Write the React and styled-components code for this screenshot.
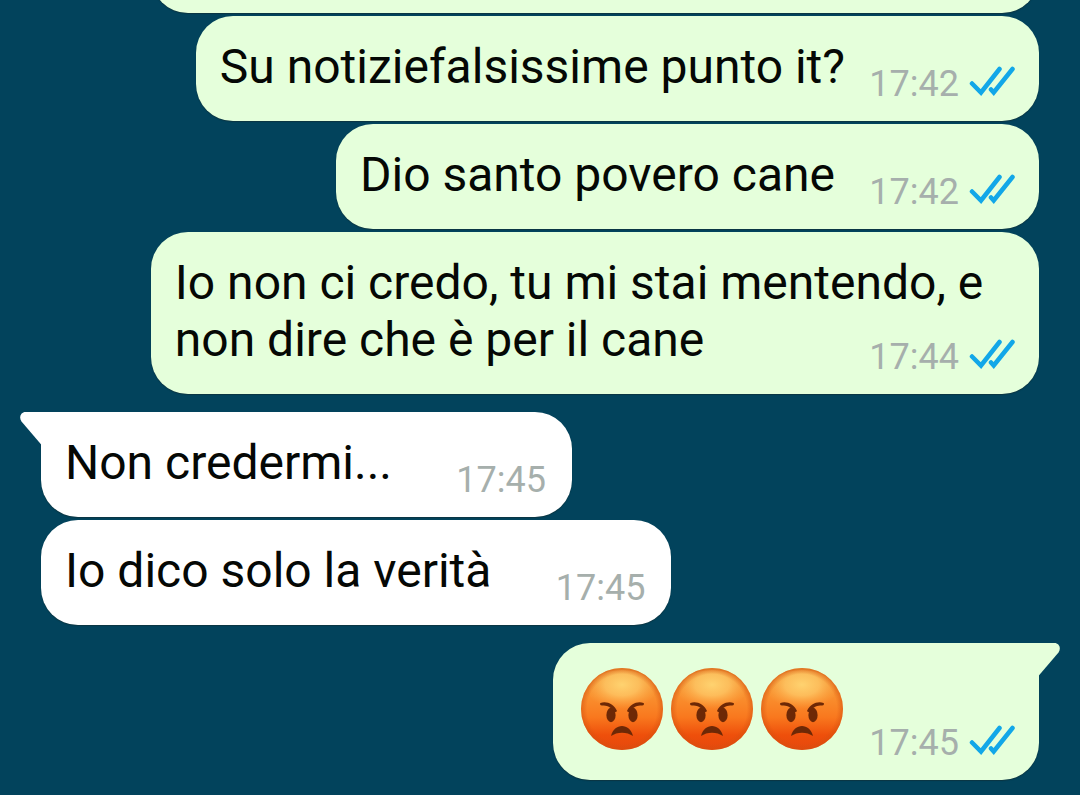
import React from 'react'
import styled, { createGlobalStyle } from 'styled-components'

const messages = [
    { id: 1, type: 'sent', text: '', time: '' },
    { id: 2, type: 'sent', text: 'Su notiziefalsissime punto it?', time: '17:42', space: 170 },
    { id: 3, type: 'sent', text: 'Dio santo povero cane', time: '17:42', space: 180 },
    { id: 4, type: 'sent', text: 'Io non ci credo, tu mi stai mentendo, e non dire che è per il cane', time: '17:44', space: 180 },
    { id: 5, type: 'received', text: 'Non credermi...', time: '17:45', space: 154, first: true },
    { id: 6, type: 'received', text: 'Io dico solo la verità', time: '17:45', space: 154 },
    { id: 7, type: 'sent', emojis: 3, time: '17:45', space: 168, first: true },
]

const Ticks = () => (
    <TicksIcon viewBox="0 0 46 32" aria-label="Letto" role="img">
        <path d="M3 18.5 L12 27.5 L30.5 4 M22 24.5 L24.7 27.5 L43.5 4" />
    </TicksIcon>
)

const Tail = ({ side }) => (
    <TailShape $side={side} viewBox="0 0 22 34" aria-hidden="true">
        <path d="M22 0 H5.5 C1 0 -1.5 5 1.5 9.5 L22 33.5 Z" />
    </TailShape>
)

const AngryFace = () => (
    <Face viewBox="0 0 90 89" role="img" aria-label="Faccina arrabbiata">
        <defs>
            <linearGradient id="skin" x1="0" y1="0" x2="0" y2="1">
                <stop offset="0" stopColor="#ee9c38" />
                <stop offset="0.35" stopColor="#f98f2e" />
                <stop offset="0.6" stopColor="#f9781e" />
                <stop offset="0.82" stopColor="#ee4f0b" />
                <stop offset="1" stopColor="#e5480d" />
            </linearGradient>
            <radialGradient id="edge">
                <stop offset="0.85" stopColor="#d4500f" stopOpacity="0" />
                <stop offset="1" stopColor="#d4500f" stopOpacity="0.55" />
            </radialGradient>
            <radialGradient id="shine" cx="0.5" cy="0.35" r="0.58">
                <stop offset="0" stopColor="#ffd673" stopOpacity="0.95" />
                <stop offset="0.45" stopColor="#ffcb69" stopOpacity="0.75" />
                <stop offset="1" stopColor="#ffae4a" stopOpacity="0" />
            </radialGradient>
        </defs>
        <circle cx="45" cy="45" r="41" fill="url(#skin)" />
        <ellipse cx="45" cy="27" rx="33" ry="21" fill="url(#shine)" />
        <circle cx="45" cy="45" r="41" fill="url(#edge)" />
        <g fill="#6d2806">
            <ellipse cx="34" cy="51" rx="4.6" ry="7.2" />
            <ellipse cx="56" cy="51" rx="4.6" ry="7.2" />
            <path d="M34 72 C37 58.5 53 58.5 56 72 C50 67.500 40 67.500 34 72 Z" />
            <path d="M23.5 39 C29 36.5 37 40 40 47 C39 49 37 48 36 46.5 C33 42.5 30 41.5 25 41.5 C23 41.5 22.5 39.5 23.5 39 Z" />
            <path d="M66.5 39 C61 36.5 53 40 50 47 C51 49 53 48 54 46.5 C57 42.5 60 41.5 65 41.5 C67 41.5 67.5 39.5 66.5 39 Z" />
        </g>
    </Face>
)

const Message = ({ message }) => {
    const { type, text, emojis, time, space, first } = message
    return (
        <Bubble $type={type} $first={first}>
            {first && <Tail side={type} />}
            <Text>
                {emojis ? (
                    <Emojis>
                        {Array.from({ length: emojis }, (_, index) => <AngryFace key={index} />)}
                        <Spacer $width={space} />
                    </Emojis>
                ) : (
                    <>
                        {text}
                        {time && <Spacer $width={space} />}
                    </>
                )}
            </Text>
            {time && (
                <Meta>
                    <time>{time}</time>
                    {type === 'sent' && <Ticks />}
                </Meta>
            )}
        </Bubble>
    )
}

const App = () => (
    <>
        <GlobalStyle />
        <Chat>
            {messages.map((message) => <Message key={message.id} message={message} />)}
        </Chat>
    </>
)

const GlobalStyle = createGlobalStyle`
    *{
        box-sizing: border-box;
    }
    body{
        margin: 0;
        background-color: #02435c;
        font-family: Roboto, "Liberation Sans", sans-serif;
    }
`
const Chat = styled.main`
    height: 100vh;
    overflow: hidden;
    display: flex;
    flex-direction: column;
    justify-content: flex-end;
    gap: 3px;
    padding: 0 41px 15px;
`
const Bubble = styled.div`
    position: relative;
    display: grid;
    flex-shrink: 0;
    max-width: 89%;
    min-height: 105px;
    margin-top: ${({ $first }) => ($first ? '15px' : '0')};
    padding: 0 ${({ $type }) => ($type === 'sent' ? '24px' : '26px')} 0 24px;
    align-self: ${({ $type }) => ($type === 'sent' ? 'flex-end' : 'flex-start')};
    background-color: ${({ $type }) => ($type === 'sent' ? '#e5ffdb' : '#ffffff')};
    border-radius: 37px;
    border-top-left-radius: ${({ $type, $first }) => ($first && $type === 'received' ? '0' : '37px')};
    border-top-right-radius: ${({ $type, $first }) => ($first && $type === 'sent' ? '0' : '37px')};
    box-shadow: 0 1px 1px rgba(20, 40, 40, 0.5);
    &:first-child{
        width: 89%;
    }
`
const Text = styled.div`
    grid-area: 1 / 1;
    padding: 22px 0 26px;
    color: #050805;
    font-size: 48px;
    line-height: 57px;
`
const Spacer = styled.span`
    display: inline-block;
    flex-shrink: 0;
    width: ${({ $width }) => $width}px;
    height: 1px;
`
const Emojis = styled.div`
    display: flex;
`
const Face = styled.svg`
    flex-shrink: 0;
    width: 90px;
    height: 89px;
    margin-top: -1px;
    margin-bottom: 1px;
`
const Meta = styled.div`
    grid-area: 1 / 1;
    align-self: end;
    justify-self: end;
    display: flex;
    align-items: center;
    gap: 10px;
    padding-bottom: 16px;
    color: #a6afac;
    font-size: 36px;
    line-height: 42px;
`
const TicksIcon = styled.svg`
    width: 46px;
    height: 32px;
    margin-bottom: 6px;
    fill: none;
    stroke: #12a7e8;
    stroke-width: 4.5;
    stroke-linecap: round;
`
const TailShape = styled.svg`
    position: absolute;
    top: 0;
    ${({ $side }) => ($side === 'sent' ? 'right: -21px; transform: scaleX(-1);' : 'left: -21px;')}
    width: 22px;
    height: 34px;
    fill: ${({ $side }) => ($side === 'sent' ? '#e5ffdb' : '#ffffff')};
`
export default App
